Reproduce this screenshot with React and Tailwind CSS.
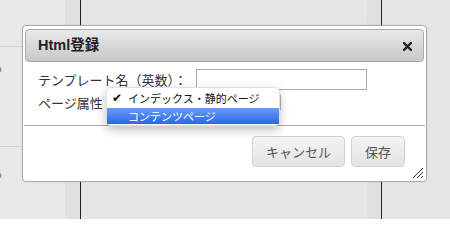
import React from "react";

const jp = { fontFamily: '"Noto Sans CJK JP", "Liberation Sans", sans-serif' };

export default function App() {
  return (
    <div className="relative w-[450px] h-[219px] overflow-hidden bg-[#e6e6e6]" style={jp}>
      {/* background page */}
      <div className="flex h-full">
        <div className="w-[65px] h-full bg-[#e9e9e9] flex flex-col">
          <div className="h-[47px] border-b border-[#d4d4d4]"></div>
          <div className="h-[100px] border-b border-[#d4d4d4] pt-[13px]">
            <div className="w-[3px] overflow-hidden text-[13px] leading-[14px] text-[#5577bb]">
              <span className="block -ml-[10px]">る</span>
            </div>
          </div>
          <div className="pt-[18px]">
            <div className="w-[3px] overflow-hidden text-[13px] leading-[16px] text-[#5577bb]">
              <span className="block -ml-[10px]">る</span>
            </div>
          </div>
        </div>
        <div className="w-[15px] h-full bg-[#e1e1e1]"></div>
        <div className="w-[1px] h-full bg-[#222]"></div>
        <div className="flex-1 h-full bg-[#e6e6e6]"></div>
        <div className="w-[14px] h-full bg-[#e0e0e0]"></div>
        <div className="w-[1px] h-full bg-[#222]"></div>
        <div className="w-[68px] h-full bg-[#e6e6e6]"></div>
      </div>

      {/* dialog */}
      <div className="absolute left-[22px] top-[25px] w-[405px] h-[157px] bg-white border border-[#aaaaaa] rounded-[4px] pt-[3px] px-[2px] shadow-[0_0_3px_rgba(0,0,0,0.08)]">
        <div className="h-[33px] border border-[#aaaaaa] rounded-[4px] bg-gradient-to-b from-[#e9e9e9] to-[#c8c8c8] flex items-center justify-between pl-[12px] pr-[11px]">
          <span className="text-[14.5px] font-bold text-[#222]" style={{ fontFamily: '"Liberation Sans", "Noto Sans CJK JP", sans-serif' }}>Html登録</span>
          <svg width="9" height="9" viewBox="0 0 9 9" className="mt-[1px]">
            <path d="M1 1 L8 8 M8 1 L1 8" stroke="#222" strokeWidth="2.4" strokeLinecap="square" />
          </svg>
        </div>
        <div className="h-[63px] pt-[7px] pl-[13px] text-[13px] text-[#333]">
          <div className="flex items-center h-[21px]">
            <span className="w-[158px] leading-[21px]">テンプレート名（英数）：</span>
            <div className="w-[171px] h-[21px] border border-[#aaaaaa] bg-white"></div>
          </div>
          <div className="flex items-center h-[21px] mt-[2px]">
            <span className="w-[70px] leading-[21px]">ページ属性</span>
            <div className="w-[173px] h-[19px] border border-[#b5b5b5] rounded-[3px] bg-white"></div>
          </div>
        </div>
        <div className="border-t border-[#aaaaaa] -mx-[1px]"></div>
        <div className="flex justify-end gap-[6px] pt-[10px] pr-[19px]">
          <button className="w-[93px] h-[31px] rounded-[4px] border border-[#d2d2d2] bg-gradient-to-b from-[#f5f5f5] to-[#e3e3e3] text-[13px] text-[#555]">キャンセル</button>
          <button className="w-[54px] h-[31px] rounded-[4px] border border-[#d2d2d2] bg-gradient-to-b from-[#f5f5f5] to-[#e3e3e3] text-[13px] text-[#555]">保存</button>
        </div>
        <svg width="12" height="12" viewBox="0 0 12 12" className="absolute right-[2px] bottom-[2px]">
          <path d="M1 11 L11 1 M5 11 L11 5 M9 11 L11 9" stroke="#333" strokeWidth="1" />
        </svg>
      </div>

      {/* select popup */}
      <div className="absolute left-[106px] top-[87px] w-[174px] h-[39px] bg-white rounded-[5px] border border-[#e2e2e2] shadow-[0_4px_10px_rgba(0,0,0,0.25)] pt-[1px] text-[11px] text-[#111]">
        <div className="h-[19px] flex items-center">
          <span className="w-[21px] pl-[5px] text-[12px] leading-[19px]" style={{ fontFamily: '"DejaVu Sans", sans-serif' }}>✔</span>
          <span className="leading-[19px]">インデックス・静的ページ</span>
        </div>
        <div className="h-[16px] flex items-center pl-[21px] bg-gradient-to-b from-[#6a9bf4] to-[#2a66ea] text-white">
          <span className="leading-[16px]">コンテンツページ</span>
        </div>
      </div>
    </div>
  );
}
